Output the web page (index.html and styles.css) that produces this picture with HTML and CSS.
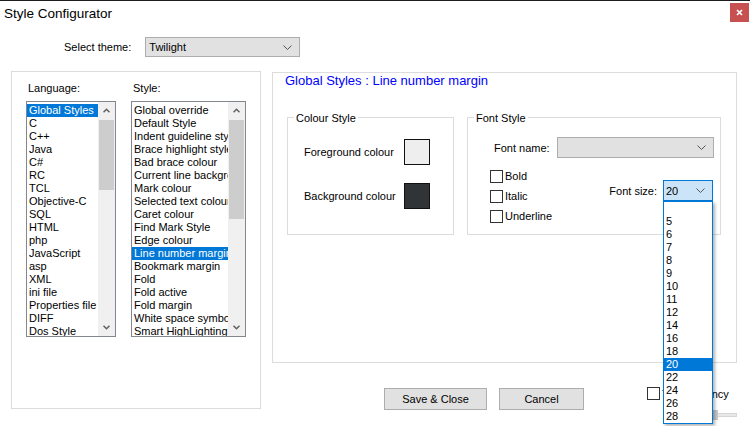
FILE: index.html
```html
<!DOCTYPE html>
<html>
<head>
<meta charset="utf-8">
<title>Style Configurator</title>
<link rel="stylesheet" href="styles.css">
</head>
<body>
<div class="window">
  <div class="titlebar">
    <span class="title">Style Configurator</span>
    <div class="close"><svg width="7" height="7" viewBox="0 0 7 7"><path d="M1 1L6 6M6 1L1 6" stroke="#fff" stroke-width="1.7"/></svg></div>
  </div>

  <div class="theme-row">
    <span class="theme-label">Select theme:</span>
    <div class="combo theme-combo"><span>Twilight</span><svg class="chev" width="9" height="5" viewBox="0 0 9 5"><path d="M0.5 0.5L4.5 4.5L8.5 0.5" fill="none" stroke="#555" stroke-width="1"/></svg></div>
  </div>

  <div class="main">
    <div class="left-group">
      <div class="col">
        <div class="col-label">Language:</div>
        <div class="listbox lang-list">
          <ul class="items">
            <li class="sel">Global Styles</li>
            <li>C</li>
            <li>C++</li>
            <li>Java</li>
            <li>C#</li>
            <li>RC</li>
            <li>TCL</li>
            <li>Objective-C</li>
            <li>SQL</li>
            <li>HTML</li>
            <li>php</li>
            <li>JavaScript</li>
            <li>asp</li>
            <li>XML</li>
            <li>ini file</li>
            <li>Properties file</li>
            <li>DIFF</li>
            <li>Dos Style</li>
          </ul>
          <div class="scrollbar">
            <div class="sb-btn"><svg width="7" height="5" viewBox="0 0 7 5"><path d="M0.5 4.2L3.5 1.2L6.5 4.2" fill="none" stroke="#606060" stroke-width="1.5"/></svg></div>
            <div class="sb-track"><div class="sb-thumb"></div></div>
            <div class="sb-btn"><svg width="7" height="5" viewBox="0 0 7 5"><path d="M0.5 0.8L3.5 3.8L6.5 0.8" fill="none" stroke="#606060" stroke-width="1.5"/></svg></div>
          </div>
        </div>
      </div>
      <div class="col">
        <div class="col-label">Style:</div>
        <div class="listbox style-list">
          <ul class="items">
            <li>Global override</li>
            <li>Default Style</li>
            <li>Indent guideline style</li>
            <li>Brace highlight style</li>
            <li>Bad brace colour</li>
            <li>Current line background colour</li>
            <li>Mark colour</li>
            <li>Selected text colour</li>
            <li>Caret colour</li>
            <li>Find Mark Style</li>
            <li>Edge colour</li>
            <li class="sel">Line number margin</li>
            <li>Bookmark margin</li>
            <li>Fold</li>
            <li>Fold active</li>
            <li>Fold margin</li>
            <li>White space symbol</li>
            <li>Smart HighLighting</li>
          </ul>
          <div class="scrollbar">
            <div class="sb-btn"><svg width="7" height="5" viewBox="0 0 7 5"><path d="M0.5 4.2L3.5 1.2L6.5 4.2" fill="none" stroke="#606060" stroke-width="1.5"/></svg></div>
            <div class="sb-track"><div class="sb-thumb"></div></div>
            <div class="sb-btn"><svg width="7" height="5" viewBox="0 0 7 5"><path d="M0.5 0.8L3.5 3.8L6.5 0.8" fill="none" stroke="#606060" stroke-width="1.5"/></svg></div>
          </div>
        </div>
      </div>
    </div>

    <div class="right-col">
      <div class="panel">
        <div class="panel-title">Global Styles : Line number margin</div>
        <div class="groups">
          <div class="group colour-group">
            <span class="legend">Colour Style</span>
            <div class="colour-row first"><span>Foreground colour</span><div class="swatch fg"></div></div>
            <div class="colour-row"><span>Background colour</span><div class="swatch bg"></div></div>
          </div>
          <div class="group font-group">
            <span class="legend">Font Style</span>
            <div class="fontname-row">
              <span>Font name:</span>
              <div class="combo fontname-combo"><span></span><svg class="chev" width="9" height="5" viewBox="0 0 9 5"><path d="M0.5 0.5L4.5 4.5L8.5 0.5" fill="none" stroke="#555" stroke-width="1"/></svg></div>
            </div>
            <div class="font-lower">
              <div class="checks">
                <div class="check"><span class="box"></span><span>Bold</span></div>
                <div class="check"><span class="box"></span><span>Italic</span></div>
                <div class="check"><span class="box"></span><span>Underline</span></div>
              </div>
              <div class="fontsize">
                <span>Font size:</span>
                <div class="size-combo">
                  <span>20</span>
                  <svg class="chev" width="9" height="5" viewBox="0 0 9 5"><path d="M0.5 0.5L4.5 4.5L8.5 0.5" fill="none" stroke="#555" stroke-width="1"/></svg>
                  <ul class="dropdown">
                    <li>&nbsp;</li>
                    <li>5</li>
                    <li>6</li>
                    <li>7</li>
                    <li>8</li>
                    <li>9</li>
                    <li>10</li>
                    <li>11</li>
                    <li>12</li>
                    <li>14</li>
                    <li>16</li>
                    <li>18</li>
                    <li class="sel">20</li>
                    <li>22</li>
                    <li>24</li>
                    <li>26</li>
                    <li>28</li>
                  </ul>
                </div>
              </div>
            </div>
          </div>
        </div>
      </div>

      <div class="bottom-row">
        <button class="btn save">Save &amp; Close</button>
        <button class="btn cancel">Cancel</button>
        <div class="transp">
          <div class="check small"><span class="box"></span><span>Transparency</span></div>
          <div class="slider"><div class="track"></div><div class="thumb"></div></div>
        </div>
      </div>
    </div>
  </div>
</div>
</body>
</html>
```

FILE: styles.css
```css
* { box-sizing: border-box; }
html, body { margin: 0; padding: 0; }
body {
  width: 750px;
  height: 426px;
  overflow: hidden;
  background: #fff;
  font-family: "Liberation Sans", Arial, sans-serif;
  font-size: 11px;
  color: #000;
}
.window {
  width: 750px;
  height: 426px;
  border-top: 1px solid #1e1e1e;
}

/* title bar */
.titlebar {
  height: 29px;
  display: flex;
  justify-content: space-between;
  align-items: flex-start;
}
.title {
  font-size: 13.5px;
  line-height: 16px;
  padding: 5px 0 0 4px;
}
.close {
  width: 19px;
  height: 19px;
  margin: 2px 1px 0 0;
  background: #c75050;
  display: flex;
  align-items: center;
  justify-content: center;
}

/* theme row */
.theme-row {
  display: flex;
  align-items: center;
  gap: 14px;
  padding: 7px 0 0 64px;
}
.combo {
  display: flex;
  align-items: center;
  justify-content: space-between;
  background: #e1e1e1;
  border: 1px solid #adadad;
}
.theme-combo {
  width: 155px;
  height: 20px;
  padding: 0 7px 0 3px;
}

/* main */
.main {
  display: flex;
  margin-top: 14px;
  padding-left: 11px;
}
.left-group {
  width: 250px;
  height: 338px;
  border: 1px solid #dcdcdc;
  display: flex;
  gap: 15px;
  padding: 9px 0 0 14px;
}
.col-label {
  height: 14px;
  line-height: 14px;
  margin-bottom: 6px;
  padding-left: 2px;
}
.listbox {
  height: 236px;
  border: 1px solid #828790;
  display: flex;
}
.lang-list { width: 90px; }
.style-list { width: 115px; }
.items {
  list-style: none;
  margin: 0;
  padding: 2px 0 0 0;
  flex: 1;
  min-width: 0;
  overflow: hidden;
}
.items li {
  height: 13px;
  line-height: 13px;
  padding-left: 2px;
  white-space: nowrap;
  overflow: hidden;
}
.items li.sel {
  background: #0078d7;
  color: #fff;
}
.scrollbar {
  width: 17px;
  background: #f0f0f0;
  display: flex;
  flex-direction: column;
}
.sb-btn {
  height: 17px;
  display: flex;
  align-items: center;
  justify-content: center;
}
.sb-track {
  flex: 1;
  padding: 1px 1px 0;
}
.sb-thumb { background: #cdcdcd; }
.lang-list .sb-thumb { height: 70px; }
.style-list .sb-thumb { height: 99px; }

/* right column */
.right-col {
  margin-left: 11px;
  margin-top: 1px;
  width: 465px;
  display: flex;
  flex-direction: column;
}
.panel {
  height: 291px;
  border: 1px solid #dcdcdc;
}
.panel-title {
  color: #0000ff;
  font-size: 13px;
  line-height: 15px;
  padding-left: 12px;
}
.groups {
  display: flex;
  gap: 13px;
  margin: 29px 0 0 14px;
}
.group {
  height: 118px;
  border: 1px solid #dcdcdc;
  display: flex;
  flex-direction: column;
}
.colour-group { width: 167px; }
.font-group { width: 254px; }
.legend {
  align-self: flex-start;
  margin: -7px 0 0 6px;
  padding: 0 2px;
  background: #fff;
  line-height: 14px;
}
.colour-row {
  display: flex;
  align-items: center;
  justify-content: space-between;
  padding: 0 23px 0 16px;
}
.colour-row.first { margin-top: 14px; }
.colour-row + .colour-row { margin-top: 18px; }
.swatch {
  width: 26px;
  height: 26px;
  border: 1px solid #111;
}
.swatch.fg { background: #eeeeee; }
.swatch.bg { background: #303436; }

.fontname-row {
  display: flex;
  align-items: center;
  justify-content: space-between;
  padding: 0 6px 0 26px;
  margin-top: 12px;
}
.fontname-combo {
  width: 157px;
  height: 21px;
  padding: 0 7px 0 3px;
}
.font-lower {
  display: flex;
  justify-content: space-between;
  align-items: flex-start;
  padding: 0 7px 0 22px;
  margin-top: 8px;
}
.checks {
  display: flex;
  flex-direction: column;
}
.check {
  display: flex;
  align-items: center;
  height: 20px;
}
.box {
  width: 13px;
  height: 13px;
  border: 1px solid #333;
  background: #fff;
  margin-right: 2px;
  flex: none;
}
.fontsize {
  display: flex;
  align-items: center;
  gap: 6px;
  margin-top: 14px;
}
.size-combo {
  position: relative;
  width: 50px;
  height: 21px;
  display: flex;
  align-items: center;
  justify-content: space-between;
  background: #cce4f7;
  border: 1px solid #0078d7;
  padding: 0 7px 0 2px;
}
.dropdown {
  position: absolute;
  left: -1px;
  top: calc(100% + 1px);
  width: 50px;
  margin: 0;
  padding: 0;
  list-style: none;
  background: #fff;
  border: 1px solid #0078d7;
  box-shadow: 2px 2px 3px rgba(0, 0, 0, 0.3);
  z-index: 5;
}
.dropdown li {
  height: 13px;
  line-height: 13px;
  padding-left: 2px;
}
.dropdown li.sel {
  background: #0078d7;
  color: #fff;
}

/* bottom */
.bottom-row {
  display: flex;
  align-items: flex-start;
  margin-top: 25px;
  padding-left: 112px;
}
.btn {
  height: 22px;
  border: 1px solid #adadad;
  background: #e1e1e1;
  font: inherit;
  color: #000;
  padding: 0;
}
.save { width: 103px; }
.cancel { width: 85px; margin-left: 12px; }
.transp {
  margin-left: 63px;
  margin-top: -1px;
}
.check.small { height: 13px; }
.slider {
  position: relative;
  margin: 10px 0 0 20px;
  width: 70px;
  height: 10px;
  display: flex;
  align-items: center;
}
.track {
  flex: 1;
  height: 4px;
  background: #e7e7e7;
  border: 1px solid #d6d6d6;
}
.thumb {
  position: absolute;
  left: 42px;
  top: 0;
  width: 9px;
  height: 10px;
  background: #c8c8c8;
}
```
